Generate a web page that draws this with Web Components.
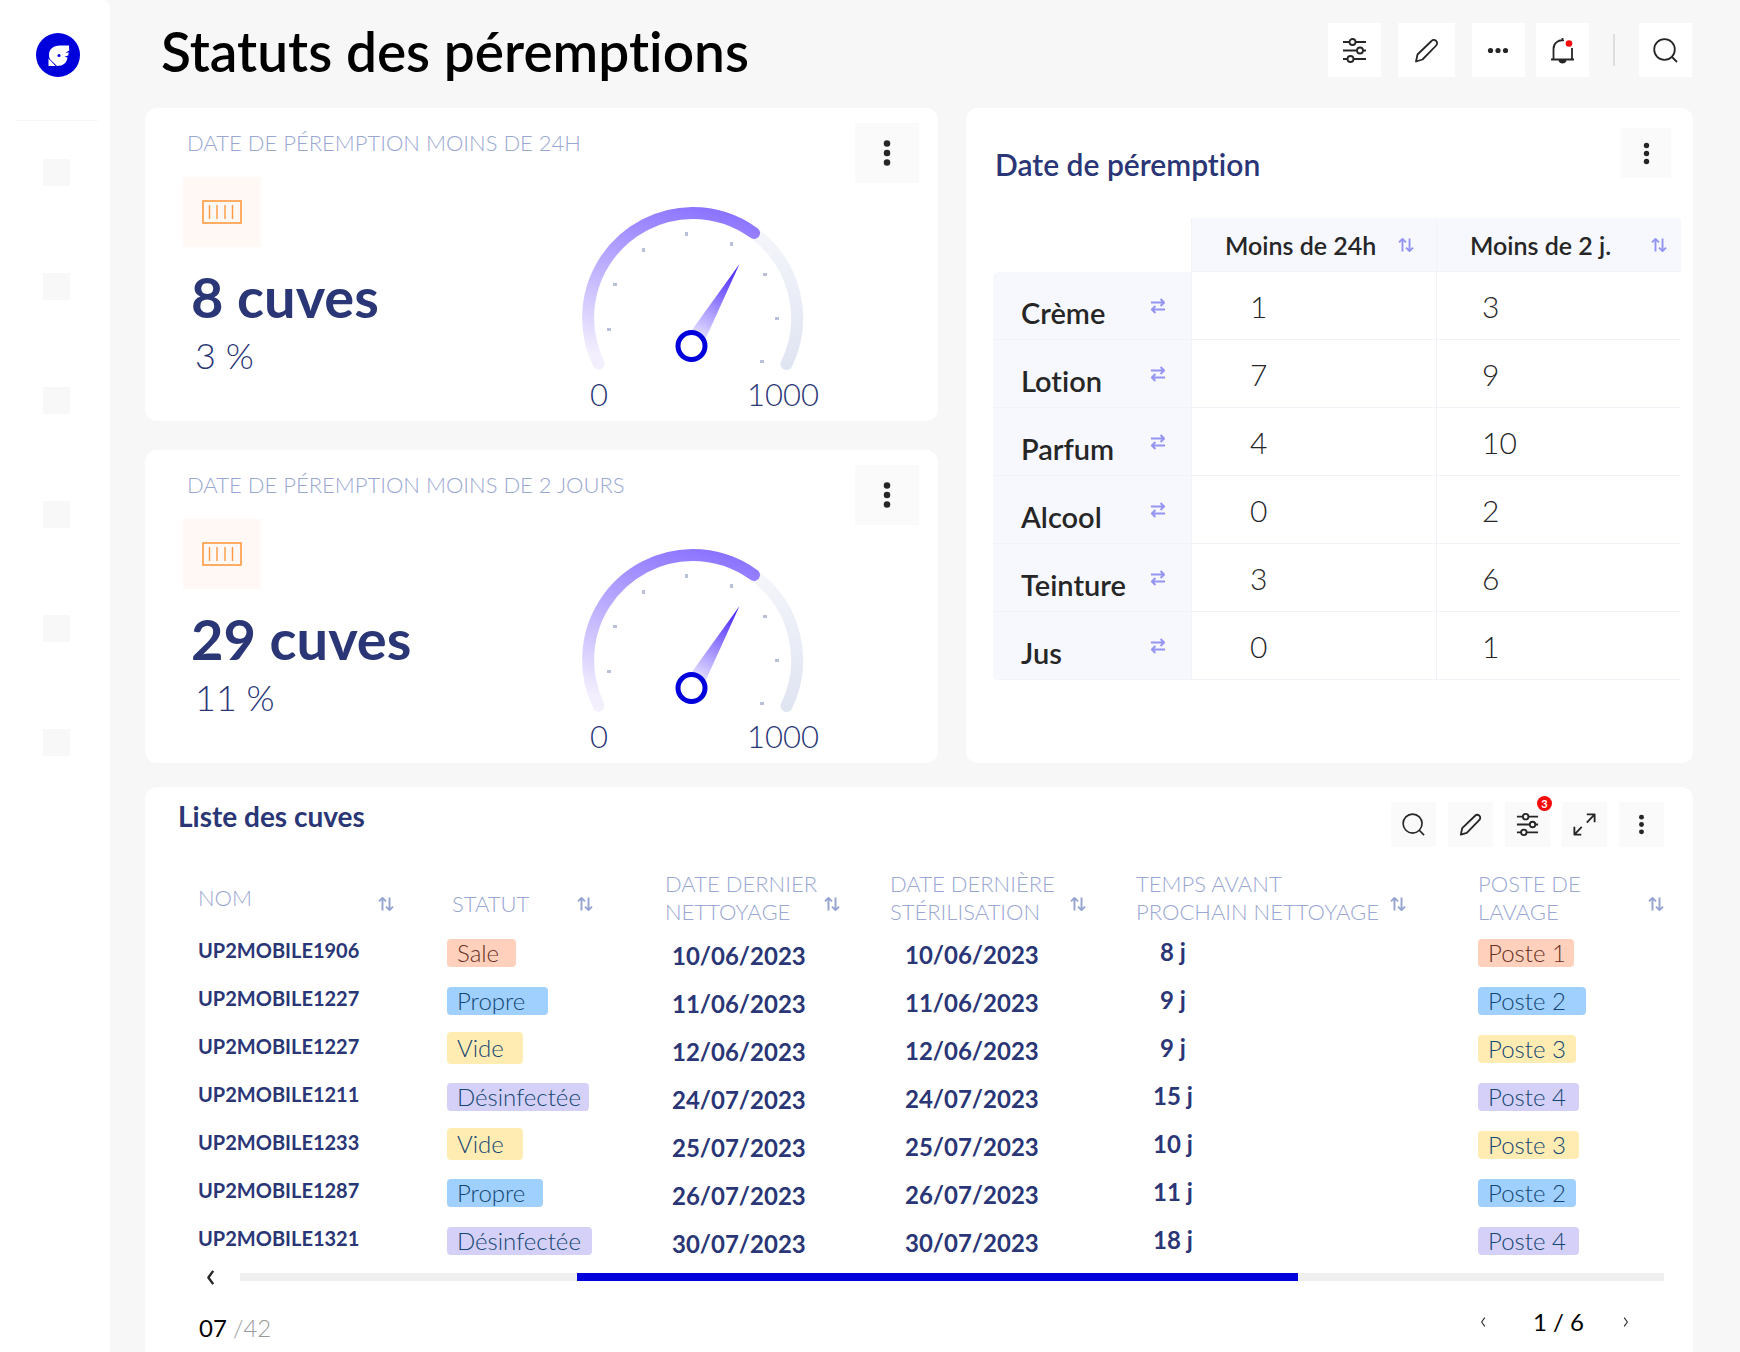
<!DOCTYPE html>
<html lang="fr">
<head>
<meta charset="utf-8">
<meta name="viewport" content="width=device-width, initial-scale=1">
<title>Statuts des péremptions</title>
<style>
  :root {
    --navy: #2a3675;
    --muted: #9aa7d2;
    --ink: #262626;
    --brand: #0000dd;
    --surface: #f7f7f7;
    --line: #f2f3f9;
  }
  * { box-sizing: border-box; }
  body {
    margin: 0;
    background: var(--surface);
    color: var(--navy);
    font-family: Lato, "Open Sans", sans-serif;
    font-variant-ligatures: none;
  }
  .app {
    display: grid;
    grid-template-columns: 110px minmax(0, 1fr);
    min-height: 100vh;
  }
  main {
    display: flex;
    flex-direction: column;
    padding: 0 47px 0 35px;
  }
  .board {
    display: grid;
    grid-template-columns: minmax(0, 793fr) minmax(0, 727fr);
    grid-template-rows: auto 1fr;
    gap: 24px 28px;
    flex: 1;
  }
  .gauges {
    display: flex;
    flex-direction: column;
    gap: 29px;
  }
  tank-list { grid-column: 1 / -1; }
</style>
</head>
<body>
<div class="app">
  <app-sidebar></app-sidebar>
  <main>
    <app-header>Statuts des péremptions</app-header>
    <div class="board">
      <div class="gauges">
        <gauge-card max="1000">
          <span slot="label">DATE DE PÉREMPTION MOINS DE 24H</span>
          <span slot="value">8 cuves</span>
          <span slot="share">3 %</span>
        </gauge-card>
        <gauge-card max="1000">
          <span slot="label">DATE DE PÉREMPTION MOINS DE 2 JOURS</span>
          <span slot="value">29 cuves</span>
          <span slot="share">11 %</span>
        </gauge-card>
      </div>
      <expiry-table>Date de péremption</expiry-table>
      <tank-list>Liste des cuves</tank-list>
    </div>
  </main>
</div>

<script>
const ICONS = {
  filter: '<path d="M1 4h6.5M13.500 4H24M1 12.500h14M21 12.500h3M1 21h4.500M11.500 21H24"/><circle cx="10.500" cy="4" r="3"/><circle cx="18" cy="12.500" r="3"/><circle cx="8.500" cy="21" r="3"/>',
  pencil: '<path d="M2 23.500 3.500 16.500 17.500 3a3.200 3.200 0 0 1 4.700 4.500L8.500 21.500z"/>',
  dots: '<g fill="currentColor" stroke="none"><circle cx="4.500" cy="12.500" r="2.600"/><circle cx="12" cy="12.500" r="2.600"/><circle cx="19.500" cy="12.500" r="2.600"/></g>',
  more: '<g fill="currentColor" stroke="none"><circle cx="12.500" cy="4.500" r="2.700"/><circle cx="12.500" cy="12.500" r="2.700"/><circle cx="12.500" cy="20.500" r="2.700"/></g>',
  bell: '<path d="M14 2.500A8.500 8.500 0 0 0 3.500 11v10.500M22 10v11.500M1 21.500h23M12.500 0v3"/><path d="M9.500 23a3.500 3.500 0 0 0 6 0z"/><circle cx="19" cy="5.500" r="3.300" fill="#f40b0b" stroke="none"/>',
  search: '<circle cx="11.500" cy="11.500" r="10.300"/><path d="m18.500 18.500 5.500 5.500"/>',
  expand: '<path d="M15 1.500h8.500V10M23.500 1.500 15 10.500M9.500 15 1.500 23.500M1.500 15v8.500H9"/>',
  sort: '<path d="M7 22.500V3M1.500 8.500 7 3l5.500 5.500M18 2.500V22M12.500 16.500 18 22l5.500-5.500"/>',
  swap: '<path d="M1.500 7H22M16.500 1.500 22 7l-5.500 5.500M23.500 18H3M8.500 12.500 3 18l5.500 5.500"/>',
  prev: '<path d="M17 1.500 9 12.500l8 11"/>',
  next: '<path d="m8 1.500 8 11-8 11"/>'
};

class UiIcon extends HTMLElement {
  constructor() {
    super();
    this.attachShadow({ mode: 'open' });
  }

  connectedCallback() {
    this.shadowRoot.innerHTML = `
      <style>
        :host { display: block; width: var(--icon-size, 25px); height: var(--icon-size, 25px); flex: none; }
        svg { display: block; width: 100%; height: 100%; overflow: visible; }
      </style>
      <svg viewBox="0 0 25 25" fill="none" stroke="currentColor" aria-hidden="true"
        stroke-width="${this.getAttribute('weight') || 1.8}" stroke-linejoin="round">${ICONS[this.getAttribute('name')]}</svg>
    `;
  }
}

class IconButton extends HTMLElement {
  constructor() {
    super();
    this.attachShadow({ mode: 'open' });
  }

  connectedCallback() {
    const badge = this.getAttribute('badge');
    this.shadowRoot.innerHTML = `
      <style>
        :host { display: block; flex: none; position: relative; }
        button {
          display: flex;
          align-items: center;
          justify-content: center;
          width: var(--button-width, 53px);
          height: var(--button-height, 54px);
          padding: 0;
          border: 0;
          background: var(--button-background, #fafafa);
          color: var(--button-color, var(--ink));
          cursor: pointer;
        }
        .badge {
          position: absolute;
          top: -6px;
          right: -2px;
          width: 15px;
          height: 15px;
          border-radius: 50%;
          background: #f40b0b;
          color: #fff;
          font-size: 11px;
          font-weight: 700;
          line-height: 15px;
          text-align: center;
        }
      </style>
      <button type="button" aria-label="${this.getAttribute('label')}">
        <ui-icon name="${this.getAttribute('icon')}" weight="${this.getAttribute('weight') || 1.8}"></ui-icon>
      </button>
      ${badge ? `<span class="badge">${badge}</span>` : ''}
    `;
  }
}

class AppSidebar extends HTMLElement {
  constructor() {
    super();
    this.attachShadow({ mode: 'open' });
  }

  connectedCallback() {
    this.shadowRoot.innerHTML = `
      <style>
        :host {
          display: block;
          background: #fff;
          border-top-right-radius: 8px;
          padding: 33px 12px 0 15px;
        }
        .logo { display: block; width: 44px; margin: 0 0 43px 21px; }
        .logo svg { display: block; width: 44px; height: 44px; }
        hr { border: 0; border-top: 1px solid #f7f7f7; margin: 0 0 38px; }
        nav { display: flex; flex-direction: column; align-items: center; gap: 87px; }
        nav a { width: 27px; height: 27px; background: #f8f8f8; }
      </style>
      <a class="logo" href="#" aria-label="Accueil">
        <svg viewBox="0 0 44 44">
          <circle cx="22" cy="22" r="22" fill="#0000dd"/>
          <path fill="#fff" d="M33 12.500H24C17 12.500 13 16.500 13 22c0 2 .6 3.500 1.500 4.700L21 33c6 0 10-3.500 10.500-8.500l-3-.8 3.700-1.200.6-3-3.300.3 3.700-2.300z"/>
          <path fill="#fff" d="M12.500 25.500 19.500 33h-7z"/>
          <circle cx="23" cy="22.500" r="1.500" fill="#0000dd"/>
        </svg>
      </a>
      <hr>
      <nav>${'<a href="#" aria-label="Menu"></a>'.repeat(6)}</nav>
    `;
  }
}

class AppHeader extends HTMLElement {
  constructor() {
    super();
    this.attachShadow({ mode: 'open' });
  }

  connectedCallback() {
    this.shadowRoot.innerHTML = `
      <style>
        :host {
          display: flex;
          justify-content: space-between;
          align-items: flex-start;
          height: 108px;
          box-sizing: border-box;
          padding: 23px 1px 0 16px;
        }
        h1 { margin: 0; color: #000; font-size: 55px; font-weight: 600; line-height: 56px; }
        .actions, .edit { display: flex; align-items: center; --button-background: #fff; }
        .actions { gap: 11px; }
        .edit { gap: 17px; }
        .wide { --button-width: 57px; }
        .rule { width: 2px; height: 32px; margin: 0 13px; background: #dedede; }
      </style>
      <h1><slot></slot></h1>
      <div class="actions">
        <div class="edit">
          <icon-button icon="filter" label="Filtrer"></icon-button>
          <icon-button class="wide" icon="pencil" label="Modifier"></icon-button>
          <icon-button icon="dots" label="Plus"></icon-button>
        </div>
        <icon-button icon="bell" label="Notifications"></icon-button>
        <span class="rule"></span>
        <icon-button icon="search" label="Rechercher"></icon-button>
      </div>
    `;
  }
}

class GaugeCard extends HTMLElement {
  constructor() {
    super();
    this.attachShadow({ mode: 'open' });
  }

  connectedCallback() {
    this.shadowRoot.innerHTML = `
      <style>
        :host {
          display: grid;
          grid-template-columns: minmax(0, 390fr) minmax(0, 403fr);
          height: 313px;
          background: #fff;
          border-radius: 12px;
        }
        .info { padding: 19px 0 0 38px; white-space: nowrap; }
        .label { color: var(--muted); font-size: 22px; font-weight: 300; line-height: 32px; padding-left: 4px; }
        .box {
          display: flex;
          align-items: center;
          justify-content: center;
          width: 78px;
          height: 70px;
          margin-top: 18px;
          background: #fff8f4;
        }
        .value { font-size: 56px; font-weight: 700; line-height: 64px; margin-top: 18px; padding-left: 8px; }
        .share { font-size: 36px; font-weight: 300; line-height: 52px; padding-left: 12px; }
        .right { display: flex; justify-content: space-between; align-items: flex-start; padding: 15px 19px 0 40px; }
        .gauge { width: 244px; padding-top: 77px; }
        .gauge svg { display: block; width: 244px; height: 172px; }
        .scale { display: flex; justify-content: space-between; padding: 2px 0 0 15px; font-size: 31px; font-weight: 300; line-height: 40px; }
        icon-button { --button-width: 64px; --button-height: 60px; --icon-size: 30px; }
      </style>
      <div class="info">
        <div class="label"><slot name="label"></slot></div>
        <div class="box">
          <svg width="40" height="24" viewBox="0 0 40 24" fill="none" stroke="#ff9a42">
            <rect x="1" y="1" width="38" height="22" stroke-width="1.600"/>
            <path d="M7.500 5v14M15 5v14M23 5v14M30.500 5v14" stroke-width="1.400"/>
          </svg>
        </div>
        <div class="value"><slot name="value"></slot></div>
        <div class="share"><slot name="share"></slot></div>
      </div>
      <div class="right">
        <div class="gauge">
          <svg viewBox="574 200 244 172" fill="none" stroke-linecap="round">
            <defs>
              <linearGradient id="arc" gradientUnits="userSpaceOnUse" x1="700" y1="207" x2="660" y2="370">
                <stop offset="0" stop-color="#8c73ff"/>
                <stop offset="1" stop-color="#f3effd"/>
              </linearGradient>
              <linearGradient id="rest" gradientUnits="userSpaceOnUse" x1="754" y1="232" x2="790" y2="363">
                <stop offset="0" stop-color="#f5f6fb"/>
                <stop offset="1" stop-color="#e0e5f2"/>
              </linearGradient>
              <linearGradient id="needle" gradientUnits="userSpaceOnUse" x1="738" y1="264" x2="696" y2="338">
                <stop offset="0" stop-color="#3d1af5"/>
                <stop offset=".4" stop-color="#7d66ff"/>
                <stop offset="1" stop-color="#e9e4ff"/>
              </linearGradient>
            </defs>
            <path d="M754 234A105 105 0 0 1 785.500 364" stroke="url(#rest)" stroke-width="12"/>
            <path d="M597.500 363.500A105 105 0 0 1 691 213A105 105 0 0 1 753 233" stroke="url(#arc)" stroke-width="12"/>
            <g fill="#b9c0d8">
              <rect x="684" y="232" width="3" height="4"/>
              <rect x="729" y="242" width="3" height="4"/>
              <rect x="762" y="273" width="4" height="3"/>
              <rect x="774" y="317" width="4" height="3"/>
              <rect x="759" y="360" width="4" height="3"/>
              <rect x="641" y="248" width="3" height="4"/>
              <rect x="612" y="283" width="4" height="3"/>
              <rect x="606" y="328" width="4" height="3"/>
            </g>
            <path d="M738.500 264 688 334q6 8 16 6z" fill="url(#needle)"/>
            <circle cx="690.500" cy="346" r="13.500" fill="#fff" stroke="#0000dd" stroke-width="5"/>
          </svg>
          <div class="scale"><span>0</span><span>${this.getAttribute('max')}</span></div>
        </div>
        <icon-button icon="more" label="Options"></icon-button>
      </div>
    `;
  }
}

class ExpiryTable extends HTMLElement {
  constructor() {
    super();
    this.attachShadow({ mode: 'open' });
    this.rows = [
      ['Crème', 1, 3],
      ['Lotion', 7, 9],
      ['Parfum', 4, 10],
      ['Alcool', 0, 2],
      ['Teinture', 3, 6],
      ['Jus', 0, 1]
    ];
  }

  connectedCallback() {
    this.shadowRoot.innerHTML = `
      <style>
        :host {
          display: block;
          box-sizing: border-box;
          background: #fff;
          border-radius: 12px;
          padding: 20px 12px 0 27px;
        }
        header { display: flex; justify-content: space-between; padding-right: 10px; height: 90px; }
        h2 { margin: 18px 0 0 2px; font-size: 30px; font-weight: 600; line-height: 36px; }
        header icon-button { --button-width: 50px; --button-height: 50px; }
        table { width: 100%; table-layout: fixed; border-collapse: separate; border-spacing: 0; color: var(--ink); text-align: left; }
        th, td { padding: 0; box-sizing: border-box; border-bottom: 1px solid var(--line); }
        thead th { height: 54px; padding: 0 14px 0 33px; background: #f7f8fd; font-size: 25px; font-weight: 600; }
        thead th, tbody td { border-left: 1px solid var(--line); }
        thead td { border-bottom: 0; }
        tbody th, tbody td { height: 68px; }
        tbody th { background: #f7f8fd; font-size: 29px; font-weight: 600; padding: 0 25px 0 28px; }
        tbody tr:first-child th { border-top-left-radius: 6px; }
        tbody tr:last-child th { border-bottom-left-radius: 6px; }
        .cell { display: flex; justify-content: space-between; align-items: center; line-height: 32px; }
        .name { padding-top: 14px; }
        .tight { padding-right: 8px; }
        tbody td { font-size: 30px; font-weight: 300; padding-left: 58px; }
        tbody td:last-child { padding-left: 45px; }
        .cell icon-button {
          --button-width: 16px;
          --button-height: 16px;
          --icon-size: 16px;
          --button-color: #9494f2;
          --button-background: transparent;
        }
      </style>
      <header>
        <h2><slot></slot></h2>
        <icon-button icon="more" label="Options"></icon-button>
      </header>
      <table>
        <colgroup><col style="width:198px"><col style="width:245px"><col style="width:245px"></colgroup>
        <thead>
          <tr>
            <td></td>
            <th scope="col"><div class="cell tight"><span>Moins de 24h</span><icon-button icon="sort" weight="3" label="Trier"></icon-button></div></th>
            <th scope="col"><div class="cell"><span>Moins de 2 j.</span><icon-button icon="sort" weight="3" label="Trier"></icon-button></div></th>
          </tr>
        </thead>
        <tbody>
          ${this.rows.map(([name, day, two]) => `
            <tr>
              <th scope="row"><div class="cell"><span class="name">${name}</span><icon-button icon="swap" weight="3" label="Permuter"></icon-button></div></th>
              <td>${day}</td>
              <td>${two}</td>
            </tr>`).join('')}
        </tbody>
      </table>
    `;
  }
}

class StatusTag extends HTMLElement {
  constructor() {
    super();
    this.attachShadow({ mode: 'open' });
  }

  connectedCallback() {
    this.shadowRoot.innerHTML = `
      <style>
        :host {
          display: inline-block;
          box-sizing: border-box;
          height: 28px;
          padding: 0 10px;
          border-radius: 4px;
          font-size: 24px;
          font-weight: 300;
          line-height: 28px;
          white-space: nowrap;
          vertical-align: middle;
          color: #134672;
        }
        :host([tone="red"]) { background: #ffd0bc; color: #66301f; }
        :host([tone="blue"]) { background: #a0d0fd; }
        :host([tone="yellow"]) { background: #ffecb2; }
        :host([tone="violet"]) { background: #d5d0f7; }
        :host([tall]) { height: 32px; line-height: 32px; }
      </style>
      <slot></slot>
    `;
  }
}

class TankList extends HTMLElement {
  constructor() {
    super();
    this.attachShadow({ mode: 'open' });
    this.columns = ['NOM', 'STATUT', 'DATE DERNIER<br>NETTOYAGE', 'DATE DERNIÈRE<br>STÉRILISATION', 'TEMPS AVANT<br>PROCHAIN NETTOYAGE', 'POSTE DE<br>LAVAGE'];
    // name, status, status tag width, cleaning, sterilisation, delay, station, station tag width
    this.rows = [
      ['UP2MOBILE1906', 'Sale', 69, '10/06/2023', '10/06/2023', '8 j', 1, 96],
      ['UP2MOBILE1227', 'Propre', 101, '11/06/2023', '11/06/2023', '9 j', 2, 108],
      ['UP2MOBILE1227', 'Vide', 76, '12/06/2023', '12/06/2023', '9 j', 3, 98],
      ['UP2MOBILE1211', 'Désinfectée', 142, '24/07/2023', '24/07/2023', '15 j', 4, 101],
      ['UP2MOBILE1233', 'Vide', 76, '25/07/2023', '25/07/2023', '10 j', 3, 101],
      ['UP2MOBILE1287', 'Propre', 96, '26/07/2023', '26/07/2023', '11 j', 2, 98],
      ['UP2MOBILE1321', 'Désinfectée', 145, '30/07/2023', '30/07/2023', '18 j', 4, 101]
    ];
    this.tones = { Sale: 'red', Propre: 'blue', Vide: 'yellow', 'Désinfectée': 'violet' };
    this.stations = ['red', 'blue', 'yellow', 'violet'];
  }

  connectedCallback() {
    this.shadowRoot.innerHTML = `
      <style>
        :host {
          display: block;
          box-sizing: border-box;
          background: #fff;
          border-radius: 12px;
          padding: 15px 29px 0 33px;
        }
        header { display: flex; justify-content: space-between; height: 66px; }
        h2 { margin: 0; font-size: 28px; font-weight: 700; line-height: 28px; }
        .tools { display: flex; gap: 12px; --button-width: 45px; --button-height: 45px; --icon-size: 23px; }
        table { width: calc(100% - 20px); margin-left: 20px; table-layout: fixed; border-collapse: collapse; text-align: left; white-space: nowrap; }
        th, td { padding: 0; box-sizing: border-box; }
        th { height: 60px; color: var(--muted); font-size: 22px; font-weight: 300; line-height: 28px; }
        .head { display: flex; justify-content: space-between; align-items: center; padding-right: 50px; }
        th:nth-child(1) .head { padding-right: 53px; }
        th:nth-child(2) .head { padding: 12px 72px 0 5px; }
        th:nth-child(5) .head { padding-right: 72px; }
        th:nth-child(6) .head { padding-right: 0; }
        .head icon-button {
          margin-top: 12px;
          --button-width: 16px;
          --button-height: 16px;
          --icon-size: 16px;
          --button-color: #96a4d2;
          --button-background: transparent;
        }
        th:nth-child(2) icon-button { margin-top: 0; }
        td { height: 48px; font-size: 24px; font-weight: 700; line-height: 28px; }
        td.name { font-size: 20px; padding-bottom: 4px; }
        td.date { padding: 8px 0 0 7px; }
        td.date + td.date { padding: 6px 0 0 15px; }
        .delay span { display: inline-block; width: 74px; text-align: center; }
        .scroll { display: flex; align-items: center; gap: 20px; padding-left: 22px; height: 26px; }
        .track { display: grid; grid-template-columns: 337fr 722fr 366fr; flex: 1; height: 8px; background: #efefef; }
        .thumb { grid-column: 2; background: var(--brand); }
        .scroll icon-button, .pages icon-button {
          --button-width: 20px;
          --button-height: 20px;
          --icon-size: 15px;
          --button-background: transparent;
        }
        .pages icon-button { --icon-size: 10px; }
        footer { display: flex; justify-content: space-between; align-items: flex-start; height: 60px; padding: 14px 28px 0 21px; color: #000; font-size: 24px; line-height: 32px; }
        footer .total { color: #999; font-weight: 300; }
        .count { padding-top: 8px; }
        .pages { display: flex; align-items: center; gap: 32px; padding-top: 2px; }
        .pages span { padding-left: 8px; }
      </style>
      <header>
        <h2><slot></slot></h2>
        <div class="tools">
          <icon-button icon="search" label="Rechercher"></icon-button>
          <icon-button icon="pencil" weight="2" label="Modifier"></icon-button>
          <icon-button icon="filter" weight="2" badge="3" label="Filtrer"></icon-button>
          <icon-button icon="expand" weight="2" label="Agrandir"></icon-button>
          <icon-button icon="more" label="Options"></icon-button>
        </div>
      </header>
      <table>
        <colgroup>
          <col style="width:249px"><col style="width:218px"><col style="width:225px">
          <col style="width:246px"><col style="width:342px"><col style="width:186px">
        </colgroup>
        <thead>
          <tr>${this.columns.map(title => `
            <th scope="col"><div class="head"><span>${title}</span><icon-button icon="sort" weight="3" label="Trier"></icon-button></div></th>`).join('')}
          </tr>
        </thead>
        <tbody>
          ${this.rows.map(([name, status, width, cleaned, sterilised, delay, station, stationWidth]) => `
            <tr>
              <td class="name">${name}</td>
              <td><status-tag tone="${this.tones[status]}" ${status === 'Vide' ? 'tall' : ''} style="width:${width}px">${status}</status-tag></td>
              <td class="date">${cleaned}</td>
              <td class="date">${sterilised}</td>
              <td class="delay"><span>${delay}</span></td>
              <td><status-tag tone="${this.stations[station - 1]}" style="width:${stationWidth}px">Poste ${station}</status-tag></td>
            </tr>`).join('')}
        </tbody>
      </table>
      <div class="scroll">
        <icon-button icon="prev" weight="4" label="Défiler à gauche"></icon-button>
        <div class="track"><div class="thumb"></div></div>
      </div>
      <footer>
        <div class="count">07 <span class="total">/42</span></div>
        <div class="pages">
          <icon-button icon="prev" weight="2.8" label="Page précédente"></icon-button>
          <span>1 / 6</span>
          <icon-button icon="next" weight="2.8" label="Page suivante"></icon-button>
        </div>
      </footer>
    `;
  }
}

customElements.define('ui-icon', UiIcon);
customElements.define('icon-button', IconButton);
customElements.define('status-tag', StatusTag);
customElements.define('app-sidebar', AppSidebar);
customElements.define('app-header', AppHeader);
customElements.define('gauge-card', GaugeCard);
customElements.define('expiry-table', ExpiryTable);
customElements.define('tank-list', TankList);
</script>
</body>
</html>
